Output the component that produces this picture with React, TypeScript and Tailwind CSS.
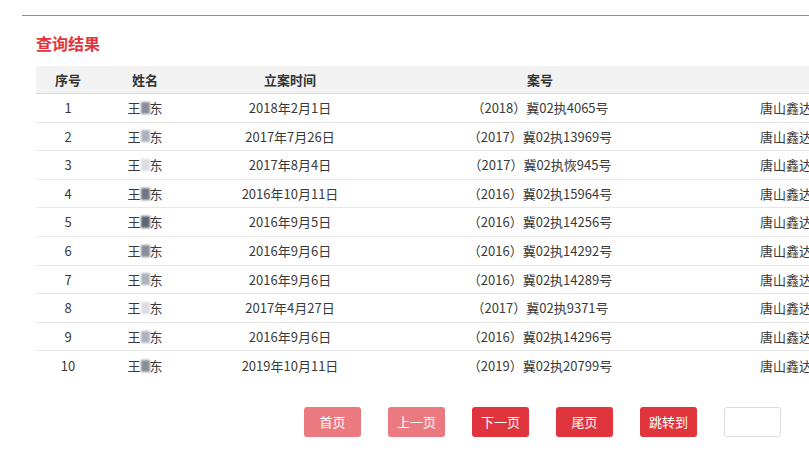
import React from "react";

const rows = [
  { no: 1, date: "2018年2月1日", caseNo: "（2018）冀02执4065号", blur: "bg-gray-500" },
  { no: 2, date: "2017年7月26日", caseNo: "（2017）冀02执13969号", blur: "bg-gray-400" },
  { no: 3, date: "2017年8月4日", caseNo: "（2017）冀02执恢945号", blur: "bg-gray-300" },
  { no: 4, date: "2016年10月11日", caseNo: "（2016）冀02执15964号", blur: "bg-gray-600" },
  { no: 5, date: "2016年9月5日", caseNo: "（2016）冀02执14256号", blur: "bg-gray-700" },
  { no: 6, date: "2016年9月6日", caseNo: "（2016）冀02执14292号", blur: "bg-gray-500" },
  { no: 7, date: "2016年9月6日", caseNo: "（2016）冀02执14289号", blur: "bg-gray-400" },
  { no: 8, date: "2017年4月27日", caseNo: "（2017）冀02执9371号", blur: "bg-gray-300" },
  { no: 9, date: "2016年9月6日", caseNo: "（2016）冀02执14296号", blur: "bg-gray-400" },
  { no: 10, date: "2019年10月11日", caseNo: "（2019）冀02执20799号", blur: "bg-gray-500" },
];

const font = "font-['Microsoft_YaHei','Noto_Sans_CJK_SC',sans-serif]";

function PageButton({ label, light }: { label: string; light?: boolean }) {
  return (
    <button
      className={`w-[57px] h-[30px] rounded-[3px] text-white text-[13px] ${
        light ? "bg-[#ea7a7f]" : "bg-[#e0353c]"
      }`}
    >
      {label}
    </button>
  );
}

export default function App() {
  return (
    <div className={`w-[809px] h-[456px] overflow-hidden bg-white ${font}`}>
      <div className="ml-[22px] pt-[15px]">
        <div className="h-[1px] bg-[#e06a70]" />
      </div>
      <h2 className="ml-[36px] mt-[17px] text-[16px] leading-[20px] font-bold text-[#e3343b]">查询结果</h2>

      <div className="ml-[36px] mt-[13px] w-[900px] text-[13px] text-[#3a3a3a]">
        <div className="flex h-[28px] items-center bg-[#f2f2f2] border-b border-[#dcdcdc] font-bold text-[#333]">
          <div className="w-[64px] text-center">序号</div>
          <div className="w-[90px] text-center">姓名</div>
          <div className="w-[200px] text-center">立案时间</div>
          <div className="w-[300px] text-center">案号</div>
          <div className="flex-1" />
        </div>
        {rows.map((r, i) => (
          <div
            key={r.no}
            className={`flex h-[28.6px] items-center ${i < rows.length - 1 ? "border-b border-[#e8e8e8]" : ""}`}
          >
            <div className="w-[64px] text-center">{r.no}</div>
            <div className="w-[90px] flex justify-center items-center">
              <span>王</span>
              <span className={`inline-block w-[9px] h-[12px] ${r.blur} opacity-80 blur-[1px]`} />
              <span>东</span>
            </div>
            <div className="w-[200px] text-center">{r.date}</div>
            <div className="w-[300px] text-center">{r.caseNo}</div>
            <div className="flex-1 pl-[70px] whitespace-nowrap">唐山鑫达实业有限公司</div>
          </div>
        ))}
      </div>

      <div className="mt-[27px] ml-[304px] flex items-center gap-[27px]">
        <PageButton label="首页" light />
        <PageButton label="上一页" light />
        <PageButton label="下一页" />
        <PageButton label="尾页" />
        <PageButton label="跳转到" />
        <input className="w-[57px] h-[30px] rounded-[3px] border border-[#dcdcdc] outline-none" />
      </div>
    </div>
  );
}
